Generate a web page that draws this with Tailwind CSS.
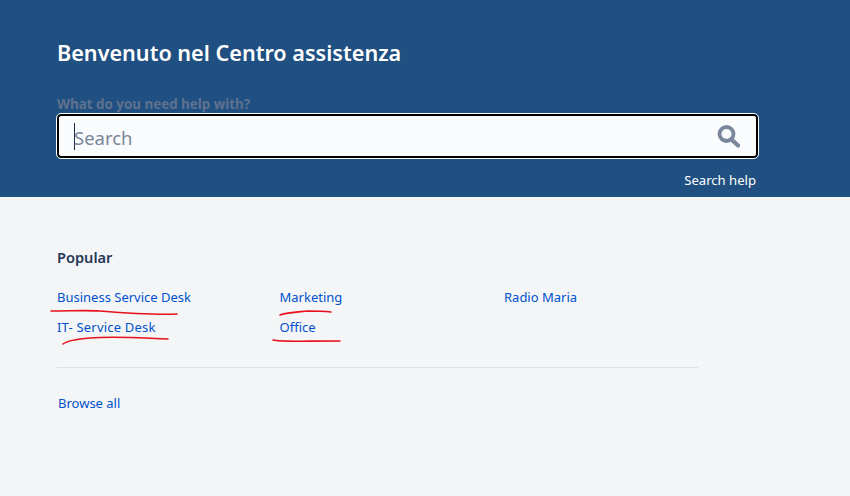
<!DOCTYPE html>
<html lang="en">
<head>
    <meta charset="UTF-8">
    <title>Centro assistenza</title>
    <script src="https://cdn.jsdelivr.net/npm/@tailwindcss/browser@4"></script>
</head>
<body class="relative h-[496px] w-[850px] overflow-hidden bg-[#f4f5f7] font-['Noto_Sans',sans-serif]">
    <!-- header -->
    <header class="h-[197px] bg-[#205081] pl-[57px] pr-[92px] pt-[37px]">
        <h1 class="h-[32px] text-[21.6px] leading-[32px] font-semibold text-white">Benvenuto nel Centro assistenza</h1>
        <label class="mt-[26px] block h-[19px] text-[13.4px] leading-[19px] font-bold text-[#5e7290]">What do you need help with?</label>
        <div class="flex h-[44px] items-center justify-between rounded-[4px] border-2 border-black bg-[#fafbfd] pl-[15px] pr-[16px] outline outline-1 outline-white">
            <div class="flex items-center">
                <span class="h-[27px] w-px bg-[#172b4d]"></span>
                <span class="ml-[-1px] mt-[4px] text-[18.5px] leading-[26px] text-[#7a869a]">Search</span>
            </div>
            <svg class="h-[24px] w-[24px] text-[#7a869a]" viewBox="0 0 24 24" fill="none" stroke="currentColor">
                <circle cx="10.5" cy="10" r="7" stroke-width="3.8" />
                <path d="M15.5 15.5L22 21.5" stroke-width="4.2" stroke-linecap="round" />
            </svg>
        </div>
        <div class="mt-[12px] flex justify-end pr-[2px]">
            <a href="#" class="text-[13.1px] leading-[20px] text-white">Search help</a>
        </div>
    </header>

    <!-- popular -->
    <main class="pl-[57px] pt-[49px]">
        <h2 class="h-[22px] text-[14.6px] leading-[22px] font-semibold text-[#253858]">Popular</h2>
        <div class="mt-[19px] grid w-[641px] grid-cols-[223.5px_223.5px_1fr] gap-y-[10px] border-b border-[#dfe1e6] pb-[30px] text-[13px] leading-[20px] text-[#0052cc]">
            <a href="#">Business Service Desk</a>
            <a href="#" class="-ml-px">Marketing</a>
            <a href="#">Radio Maria</a>
            <a href="#" class="tracking-[0.2px]">IT- Service Desk</a>
            <a href="#" class="-ml-px">Office</a>
        </div>
        <a href="#" class="mt-[25px] ml-px block text-[13px] leading-[20px] text-[#0052cc]">Browse all</a>
    </main>

    <!-- red pen marks drawn on the screenshot -->
    <svg class="absolute left-0 top-0" width="850" height="496" fill="none" stroke="#e8101c" stroke-width="1.6" stroke-linecap="round" stroke-linejoin="round">
        <path d="M51 311C70 311 85 310 100 311C125 313 150 315 177 314" />
        <path d="M63 344C68 340 78 339 90 338C115 336 140 338 168 339" />
        <path d="M280 315C288 312 298 312 308 311C315 311 322 311 331 312" />
        <path d="M273 340C280 342 300 341 340 341" />
    </svg>
</body>
</html>
